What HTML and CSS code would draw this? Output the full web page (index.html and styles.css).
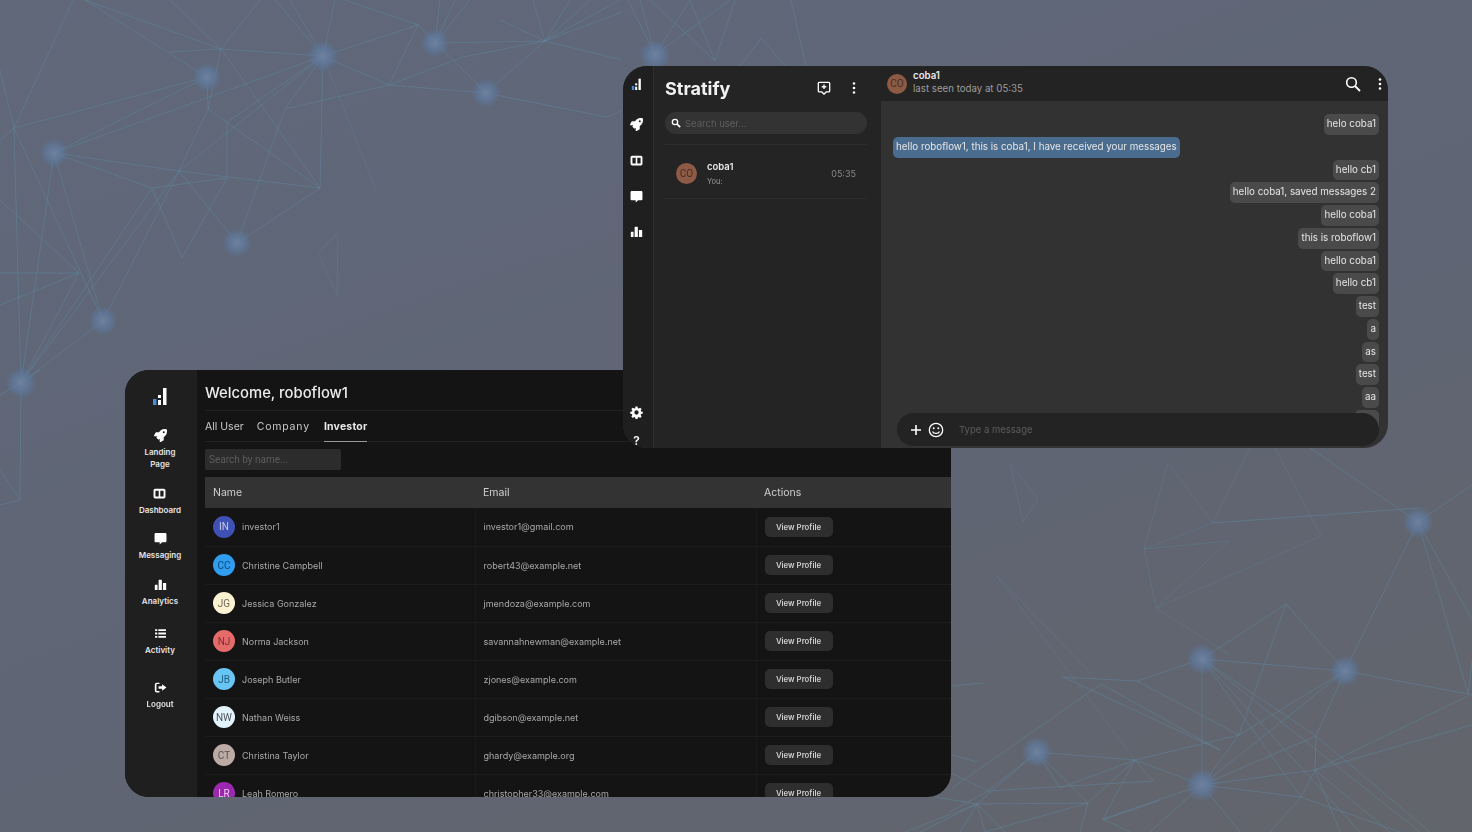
FILE: index.html

```html
<!DOCTYPE html>
<html>
<head>
    <meta charset="UTF-8">
    <meta name="viewport" content="width=device-width, initial-scale=1.0">
    <title>Stratify</title>
    <link rel="stylesheet" href="styles.css">
</head>
<body>
    <!-- network lines behind the windows -->
    <svg class="backdrop" width="1472" height="832" viewBox="0 0 1472 832">
        <defs>
            <radialGradient id="glow">
                <stop offset="0" stop-color="#70839f" stop-opacity="0.95"/>
                <stop offset="0.5" stop-color="#607a9e" stop-opacity="0.75"/>
                <stop offset="1" stop-color="#5b7599" stop-opacity="0"/>
            </radialGradient>
        </defs>
        <g class="lines">
            <!-- top left -->
            <path d="M73 0L14 128L207 77M0 70L14 128L0 140M14 128L21 383M14 128L103 321M0 200L79 273M54 153L207 77M54 153L323 56M54 153L179 171L320 188M54 153L103 321M54 153L21 383M54 153L152 188L227 178"/>
            <path d="M85 0L221 49L323 56M170 0L221 49L260 0M170 52L221 49L320 188M221 49L208 109M85 0L207 77L208 109L320 188M208 109L179 171L21 383M179 171L323 56M179 171L237 243L320 188L323 56M179 171L103 321M237 243L285 109L323 56M285 109L389 85L323 56M227 122L323 56M227 122L227 178L182 258L152 188L21 383"/>
            <path d="M79 273L0 273M79 273L0 305M79 273L21 383M103 321L21 383M21 383L20 500L0 505M0 470L20 500M21 383L0 395M21 383L40 370"/>
            <!-- top middle -->
            <path class="faint" d="M323 56L376 190"/>
            <path d="M275 0L323 56L290 0M323 56L335 0M323 56L418 25L345 0M389 85L418 25L486 93M389 85L463 57L545 41L435 43M389 85L486 93L607 117L622 110M486 93L545 41M440 0L435 43L455 0M470 0L435 43"/>
            <path d="M533 0L545 41L570 0M545 41L620 0M545 41L590 0M545 41L622 60M500 20L545 41M545 41L622 12M628 0L655 55L640 0M655 55L690 0M655 55L730 0M650 0L715 61L735 0M690 0L715 61M740 66L761 38L785 66M791 0L806 66"/>
            <path class="faint" d="M338 233L318 253L337 295Z"/>
            <path class="faint" d="M1010 463L1038 499L1023 522Z"/>
            <!-- bottom right, upper part -->
            <path class="faint" d="M1168 463L1144 549L1156 608L1230 655M1168 463L1213 523L1250 448M1213 523L1144 549L1229 541L1156 608L1321 536L1275 448"/>
            <path d="M1213 523L1418 508M1310 448L1418 522L1472 485M1418 522L1345 671M1418 522L1468 694M1418 522L1472 620M1468 694L1472 660"/>
            <path d="M1202 659L1286 604L1345 671L1468 694M1202 659L1345 671M1286 604L1239 735L1135 760M1202 659L1137 681L1063 677L1220 750M1137 681L1239 735M1101 684L1220 750M1101 684L952 788"/>
            <path class="faint" d="M996 575L1135 760M996 575L1097 680"/>
            <path d="M952 686L983 683M952 755L977 762"/>
            <!-- bottom right, lower part -->
            <path d="M1202 659L1202 785M1202 659L1301 797M1202 659L1360 832M1202 659L1420 832M1202 659L1316 736M1345 671L1316 736L1202 785M1345 671L1239 735L1202 785M1345 671L1202 785"/>
            <path d="M1316 736L1315 770L1202 785M1315 770L1301 797L1202 785M1316 736L1430 832M1315 770L1472 694M1315 770L1472 725M1315 770L1390 832M1315 770L1340 832M1301 797L1400 832M1301 797L1270 832"/>
            <path d="M1202 785L1135 760L1037 752M1135 760L1060 788L1037 752M1135 760L1088 803L1037 752M1135 760L1103 819L1202 785M1103 819L1130 832M1135 760L1153 781L988 791M1202 785L1240 832M1202 785L1150 832"/>
            <path d="M1037 752L977 804L1088 803M988 791L1037 752M945 770L988 791M977 804L935 797M977 804L920 832M977 804L905 832M977 804L960 832M977 804L985 832M977 804L1005 832M1088 803L985 832M1088 803L1080 832M1103 820L1160 800M988 791L950 812"/>
        </g>
        <g class="nodes">
            <circle cx="54" cy="153" r="15"/>
            <circle cx="207" cy="77" r="15"/>
            <circle cx="323" cy="56" r="16"/>
            <circle cx="435" cy="43" r="15"/>
            <circle cx="486" cy="93" r="15"/>
            <circle cx="237" cy="243" r="15"/>
            <circle cx="103" cy="321" r="15"/>
            <circle cx="21" cy="383" r="16"/>
            <circle cx="655" cy="55" r="16"/>
            <circle cx="1418" cy="522" r="16"/>
            <circle cx="1202" cy="659" r="16"/>
            <circle cx="1345" cy="671" r="16"/>
            <circle cx="1037" cy="752" r="16"/>
            <circle cx="1202" cy="785" r="17"/>
        </g>
    </svg>

    <!-- admin window -->
    <div class="admin">
        <nav class="admin-nav">
            <div class="nav-logo">
                <svg width="16" height="18" viewBox="0 0 16 18"><rect x="1" y="12" width="3.5" height="6" fill="#4a8be0"/><rect x="6" y="8" width="3" height="3" fill="#fff"/><rect x="6" y="13" width="3" height="5" fill="#fff"/><rect x="11" y="1" width="3.5" height="17" fill="#fff"/></svg>
            </div>
            <a class="nav-item nav-first"><svg class="ico"><use href="#rocket"/></svg><span>Landing<br>Page</span></a>
            <a class="nav-item"><svg class="ico"><use href="#columns"/></svg><span>Dashboard</span></a>
            <a class="nav-item"><svg class="ico"><use href="#bubble"/></svg><span>Messaging</span></a>
            <a class="nav-item"><svg class="ico"><use href="#bars"/></svg><span>Analytics</span></a>
            <a class="nav-item nav-wide"><svg class="ico" viewBox="0 0 24 24"><path d="M2 4h4v3.4H2zM8 4h14v3.4H8zM2 10.3h4v3.4H2zM8 10.3h14v3.4H8zM2 16.6h4V20H2zM8 16.6h14V20H8z"/></svg><span>Activity</span></a>
            <a class="nav-item nav-wider"><svg class="ico" viewBox="0 0 24 24"><path d="M10 3v2.6H5.500a1 1 0 0 0-1 1v10.800a1 1 0 0 0 1 1H10V21H5a3.500 3.500 0 0 1-3.500-3.500v-11A3.500 3.500 0 0 1 5 3zM15 6l8 6-8 6v-3.600H8.500V9.600H15z"/></svg><span>Logout</span></a>
        </nav>
        <main class="admin-main">
            <h1 class="welcome">Welcome, roboflow1</h1>
            <div class="tabs">
                <span class="tab">All User</span>
                <span class="tab tab-co">Company</span>
                <span class="tab tab-on">Investor</span>
            </div>
            <div class="search-row"><input class="name-search" placeholder="Search by name..."></div>
            <table class="people">
                <thead>
                    <tr><th class="col-name">Name</th><th class="col-email">Email</th><th>Actions</th></tr>
                </thead>
                <tbody>
                    <tr><td><div class="who"><i class="face f1">IN</i>investor1</div></td><td>investor1@gmail.com</td><td><button class="view">View Profile</button></td></tr>
                    <tr><td><div class="who"><i class="face f2">CC</i>Christine Campbell</div></td><td>robert43@example.net</td><td><button class="view">View Profile</button></td></tr>
                    <tr><td><div class="who"><i class="face f3">JG</i>Jessica Gonzalez</div></td><td>jmendoza@example.com</td><td><button class="view">View Profile</button></td></tr>
                    <tr><td><div class="who"><i class="face f4">NJ</i>Norma Jackson</div></td><td>savannahnewman@example.net</td><td><button class="view">View Profile</button></td></tr>
                    <tr><td><div class="who"><i class="face f5">JB</i>Joseph Butler</div></td><td>zjones@example.com</td><td><button class="view">View Profile</button></td></tr>
                    <tr><td><div class="who"><i class="face f6">NW</i>Nathan Weiss</div></td><td>dgibson@example.net</td><td><button class="view">View Profile</button></td></tr>
                    <tr><td><div class="who"><i class="face f7">CT</i>Christina Taylor</div></td><td>ghardy@example.org</td><td><button class="view">View Profile</button></td></tr>
                    <tr><td><div class="who"><i class="face f8">LR</i>Leah Romero</div></td><td>christopher33@example.com</td><td><button class="view">View Profile</button></td></tr>
                </tbody>
            </table>
        </main>
    </div>

    <!-- chat window -->
    <div class="chat">
        <nav class="chat-rail">
            <svg class="rail-logo" width="11" height="12" viewBox="0 0 16 18"><rect x="1" y="12" width="3.5" height="6" fill="#4a8be0"/><rect x="6" y="8" width="3" height="3" fill="#fff"/><rect x="6" y="13" width="3" height="5" fill="#fff"/><rect x="11" y="1" width="3.5" height="17" fill="#fff"/></svg>
            <svg class="ico"><use href="#rocket"/></svg>
            <svg class="ico"><use href="#columns"/></svg>
            <svg class="ico"><use href="#bubble"/></svg>
            <svg class="ico"><use href="#bars"/></svg>
            <div class="rail-gap"></div>
            <svg class="ico" viewBox="0 0 24 24"><path d="M13.900 1l.5 3 1.900.8 2.500-1.800 2.700 2.700-1.800 2.500.8 1.900 3 .5v3.800l-3 .5-.8 1.900 1.800 2.500-2.700 2.700-2.500-1.800-1.900.8-.5 3h-3.800l-.5-3-1.900-.8-2.500 1.800-2.700-2.700 1.800-2.500-.8-1.900-3-.5v-3.800l3-.5.8-1.900-1.800-2.500 2.700-2.700 2.500 1.800 1.900-.8.5-3zM12 8a4 4 0 1 0 0 8 4 4 0 0 0 0-8z" fill-rule="evenodd"/></svg>
            <span class="rail-help">?</span>
        </nav>
        <section class="threads">
            <header class="threads-top">
                <span class="brand">Stratify</span>
                <svg class="new-chat" width="14" height="14" viewBox="0 0 16 16"><path d="M2.500 1.500h11a1 1 0 0 1 1 1v9a1 1 0 0 1-1 1h-3L8 15l-2.500-2.500h-3a1 1 0 0 1-1-1v-9a1 1 0 0 1 1-1z" fill="none" stroke="#fff" stroke-width="1.500"/><path d="M8 4v5.200M5.400 6.600h5.200" stroke="#fff" stroke-width="1.500"/></svg>
                <svg class="dots" width="4" height="12" viewBox="0 0 4 12"><circle cx="2" cy="1.500" r="1.300"/><circle cx="2" cy="6" r="1.300"/><circle cx="2" cy="10.500" r="1.300"/></svg>
            </header>
            <div class="user-search">
                <svg width="10" height="10" viewBox="0 0 12 12"><circle cx="4.800" cy="4.800" r="3.200" fill="none" stroke="#fff" stroke-width="1.600"/><path d="M7.300 7.300l3.700 3.700" stroke="#fff" stroke-width="2"/></svg>
                <span>Search user...</span>
            </div>
            <div class="thread">
                <i class="face co">CO</i>
                <div class="thread-text"><b>coba1</b><small>You:</small></div>
                <span class="thread-time">05:35</span>
            </div>
        </section>
        <section class="talk">
            <header class="talk-top">
                <i class="face co">CO</i>
                <div class="talk-who"><b>coba1</b><span>last seen today at 05:35</span></div>
                <svg class="talk-search" width="16" height="16" viewBox="0 0 16 16"><circle cx="6.500" cy="6.500" r="4.800" fill="none" stroke="#fff" stroke-width="1.600"/><path d="M10 10l5 5" stroke="#fff" stroke-width="1.800"/></svg>
                <svg class="dots" width="4" height="12" viewBox="0 0 4 12"><circle cx="2" cy="1.500" r="1.300"/><circle cx="2" cy="6" r="1.300"/><circle cx="2" cy="10.500" r="1.300"/></svg>
            </header>
            <div class="msgs">
                <p class="msg">helo coba1</p>
                <p class="msg msg-in">hello roboflow1, this is coba1, I have received your messages</p>
                <p class="msg">hello cb1</p>
                <p class="msg">hello coba1, saved messages 2</p>
                <p class="msg">hello coba1</p>
                <p class="msg">this is roboflow1</p>
                <p class="msg">hello coba1</p>
                <p class="msg">hello cb1</p>
                <p class="msg">test</p>
                <p class="msg">a</p>
                <p class="msg">as</p>
                <p class="msg">test</p>
                <p class="msg">aa</p>
                <p class="msg msg-blank"></p>
            </div>
            <div class="composer">
                <svg width="12" height="12" viewBox="0 0 12 12"><path d="M6 1v10M1 6h10" stroke="#fff" stroke-width="1.600"/></svg>
                <svg width="16" height="16" viewBox="0 0 16 16"><circle cx="8" cy="8" r="6.700" fill="none" stroke="#fff" stroke-width="1.300"/><circle cx="5.700" cy="6.200" r="1" fill="#fff"/><circle cx="10.300" cy="6.200" r="1" fill="#fff"/><path d="M4.500 9.500c1 2.500 6 2.500 7 0" fill="none" stroke="#fff" stroke-width="1.200"/></svg>
                <span class="type-hint">Type a message</span>
            </div>
        </section>
    </div>

    <!-- shared icons -->
    <svg class="sprites" width="0" height="0">
        <symbol id="rocket" viewBox="0 0 512 512"><path d="M505 19c-1-5.500-6.700-11-12-12C461 0 436 0 410 0 307 0 245 55 199 128H95c-16 0-36 12-43 26L2.500 253A28 28 0 0 0 0 264a24 24 0 0 0 24 24h104l-22.500 22.500c-11 11-13 32 0 45L156 407c11 11 32 13 45 0l23-23v104a24 24 0 0 0 24 24 29 29 0 0 0 11-2.500l99-49.500c14.500-7 26.500-26.500 26.500-43V313C457 267 512 205 512 102c0-25 0-51-7-83zM384 168a40 40 0 1 1 40-40 40 40 0 0 1-40 40z" fill-rule="evenodd"/></symbol>
        <symbol id="columns" viewBox="0 0 24 24"><path d="M4 3h16a3 3 0 0 1 3 3v12a3 3 0 0 1-3 3H4a3 3 0 0 1-3-3V6a3 3 0 0 1 3-3zm.5 4v10.500h6V7zm9 0v10.500h6V7z" fill-rule="evenodd"/></symbol>
        <symbol id="bubble" viewBox="0 0 24 24"><path d="M3 2h18a2 2 0 0 1 2 2v13a2 2 0 0 1-2 2h-6l-4.500 4v-4H3a2 2 0 0 1-2-2V4a2 2 0 0 1 2-2z"/></symbol>
        <symbol id="bars" viewBox="0 0 24 24"><path d="M1.500 13.500a1 1 0 0 1 1-1h4v9.500h-4a1 1 0 0 1-1-1zM8.500 4a1 1 0 0 1 1-1h4a1 1 0 0 1 1 1v18h-6zM16.500 9h5a1 1 0 0 1 1 1v11a1 1 0 0 1-1 1h-5z"/></symbol>
    </svg>
</body>
</html>
```

FILE: styles.css

```css
* {
    box-sizing: border-box;
}

body {
    margin: 0;
    width: 1472px;
    height: 832px;
    overflow: hidden;
    position: relative;
    background: linear-gradient(160deg, #60687a 0%, #5f6574 55%, #63656c 100%);
    font-family: "Inter", "Liberation Sans", sans-serif;
    color: #fff;
}

.backdrop {
    position: absolute;
    left: 0;
    top: 0;
    filter: blur(0.4px);
}

.sprites {
    position: absolute;
}

.lines path {
    fill: none;
    stroke: #5f8ba3;
    stroke-width: 1;
    stroke-opacity: 0.45;
}

.lines path.faint {
    stroke-opacity: 0.3;
}

.nodes circle {
    fill: url(#glow);
}

.ico {
    width: 13px;
    height: 13px;
    fill: #fff;
    display: block;
}

.face {
    display: flex;
    align-items: center;
    justify-content: center;
    flex: none;
    width: 22px;
    height: 22px;
    border-radius: 50%;
    font-style: normal;
    font-family: "Roboto", sans-serif;
    font-size: 10px;
}

.f1 { background: #3f51b5; color: #c5cae9; }
.f2 { background: #2f9ef0; color: #12476e; }
.f3 { background: #fdf3d3; color: #6d6a58; }
.f4 { background: #e56a6a; color: #7c2f2f; }
.f5 { background: #68c6f7; color: #23607f; }
.f6 { background: #e3f3fc; color: #4c5458; }
.f7 { background: #bcaaa4; color: #5a504c; }
.f8 { background: #9c27b0; color: #ecd0f1; }
.co { background: #8d5a45; color: #4a2e22; }

/* admin window */
.admin {
    position: absolute;
    left: 125px;
    top: 370px;
    width: 826px;
    height: 427px;
    display: flex;
    border-radius: 24px 0 24px 24px;
    overflow: hidden;
    background: #141414;
    filter: blur(0.35px);
}

.admin-nav {
    width: 72px;
    flex: none;
    background: #1f1f1f;
    display: flex;
    flex-direction: column;
    align-items: center;
    padding: 17px 2px 0 0;
}

.nav-logo {
    height: 18px;
}

.nav-item {
    display: flex;
    flex-direction: column;
    align-items: center;
    gap: 4px;
    margin-top: 16.5px;
    font-size: 8px;
    line-height: 12px;
    font-weight: 600;
    text-align: center;
    color: #e6e6e6;
}

.nav-first {
    margin-top: 24px;
}

.nav-wide {
    margin-top: 20px;
}

.nav-wider {
    margin-top: 25px;
}

.admin-main {
    flex: 1;
    padding: 0 0 0 8px;
    min-width: 0;
}

.welcome {
    margin: 0;
    height: 41px;
    line-height: 46px;
    font-size: 14.8px;
    font-weight: 500;
    color: #ececec;
    border-bottom: 1px solid #222;
}

.tabs {
    display: flex;
    gap: 13px;
    height: 31px;
    border-bottom: 1px solid #222;
    font-size: 10.5px;
    color: #c9c9c9;
}

.tab {
    line-height: 31px;
}

.tab-co {
    letter-spacing: 0.8px;
}

.tab-on {
    margin-left: 1px;
    font-weight: 700;
    letter-spacing: 0.2px;
    color: #e8e8e8;
    border-bottom: 1px solid #999;
    height: 31px;
}

.search-row {
    height: 35px;
    padding-top: 7px;
}

.name-search {
    display: block;
    width: 136px;
    height: 21px;
    border: none;
    border-radius: 2px;
    background: #2c2c2c;
    padding: 0 4px;
    font: 10px "Roboto", sans-serif;
}

.name-search::placeholder {
    color: #5c5c5c;
}

.people {
    width: 746px;
    border-collapse: collapse;
    table-layout: fixed;
    font-size: 9px;
    color: #a9a9a9;
}

.people th {
    height: 31px;
    background: #333;
    padding: 0 0 0 8px;
    text-align: left;
    font-size: 10.5px;
    font-weight: 400;
    color: #cfcfcf;
}

.people .col-name {
    width: 270px;
}

.people .col-email {
    width: 281px;
}

.people td {
    height: 38px;
    padding: 0 0 0 8px;
    border-bottom: 1px solid #1c1c1c;
    border-left: 1px solid #1a1a1a;
}

.people td:first-child {
    border-left: none;
}

.who {
    display: flex;
    align-items: center;
    gap: 7px;
}

.view {
    display: block;
    width: 68px;
    height: 20px;
    padding: 0;
    border: none;
    border-radius: 5px;
    background: #2e2e2e;
    color: #cfcfcf;
    font: 600 7.8px "Inter", sans-serif;
}

/* chat window */
.chat {
    position: absolute;
    left: 623px;
    top: 66px;
    width: 765px;
    height: 382px;
    display: flex;
    border-radius: 24px;
    overflow: hidden;
    background: #323232;
    filter: blur(0.35px);
}

.chat-rail {
    width: 31px;
    flex: none;
    background: #1f1f1f;
    border-right: 1px solid #2e2e2e;
    display: flex;
    flex-direction: column;
    align-items: center;
    gap: 22.7px;
    padding: 12px 3px 2px 0;
}

.rail-logo {
    margin-bottom: 5.5px;
}

.rail-gap {
    flex: 1;
}

.rail-help {
    font-size: 12px;
    font-weight: 600;
    line-height: 10px;
    height: 10px;
    margin-top: -5.7px;
}

.threads {
    width: 227px;
    flex: none;
    background: #242424;
    padding: 0 14px 0 11px;
}

.threads-top {
    display: flex;
    align-items: center;
    height: 44px;
    margin-bottom: 2px;
}

.brand {
    flex: 1;
    font-size: 18px;
    font-weight: 700;
    color: #f2f2f2;
}

.new-chat {
    margin-right: 21px;
}

.dots {
    fill: #fff;
    margin-right: 11px;
}

.user-search {
    display: flex;
    align-items: center;
    gap: 4px;
    height: 22px;
    border-radius: 11px;
    background: #333;
    padding-left: 6px;
    font: 9.5px "Inter", sans-serif;
    color: #5e5e5e;
}

.thread {
    display: flex;
    align-items: center;
    height: 55px;
    margin-top: 10px;
    padding: 3px 11px 0;
    border-top: 1px solid #2e2e2e;
    border-bottom: 1px solid #2e2e2e;
}

.thread .face {
    width: 21px;
    height: 21px;
}

.thread-text {
    flex: 1;
    display: flex;
    flex-direction: column;
    gap: 5px;
    margin-left: 10px;
    font-size: 9.5px;
}

.thread-text b {
    font-weight: 600;
    color: #e8e8e8;
}

.thread-text small {
    font-size: 7.5px;
    color: #9a9a9a;
}

.thread-time {
    font-size: 9px;
    color: #888;
}

.talk {
    flex: 1;
    min-width: 0;
    display: flex;
    flex-direction: column;
    position: relative;
}

.talk-top {
    display: flex;
    align-items: center;
    flex: none;
    height: 35px;
    background: #232323;
    padding-left: 6px;
}

.talk-top .face {
    width: 20px;
    height: 20px;
}

.talk-who {
    flex: 1;
    display: flex;
    flex-direction: column;
    gap: 2px;
    margin: -4px 0 0 6px;
    font-size: 9.7px;
    color: #9d9d9d;
}

.talk-who b {
    font-weight: 600;
    color: #e8e8e8;
}

.talk-search {
    margin-right: 17px;
}

.talk-top .dots {
    margin-right: 6px;
}

.msgs {
    flex: 1;
    min-height: 0;
    overflow: hidden;
    display: flex;
    flex-direction: column;
    align-items: flex-end;
    gap: 2px;
    padding: 13px 9px 0 12px;
}

.msg {
    margin: 0;
    flex: none;
    height: 20.75px;
    line-height: 20.75px;
    padding: 0 3px;
    border-radius: 5px;
    background: #4a4a4a;
    font-size: 9.8px;
    color: #e6e6e6;
}

.msg-in {
    align-self: flex-start;
    background: #4a6c8f;
}

.msg-blank {
    width: 24px;
}

.composer {
    position: absolute;
    left: 16px;
    right: 9px;
    bottom: 2px;
    height: 33px;
    border-radius: 17px;
    background: #232323;
    display: flex;
    align-items: center;
    gap: 6px;
    padding-left: 13px;
}

.type-hint {
    margin-left: 9px;
    font-size: 9.5px;
    color: #5c5c5c;
}
```
